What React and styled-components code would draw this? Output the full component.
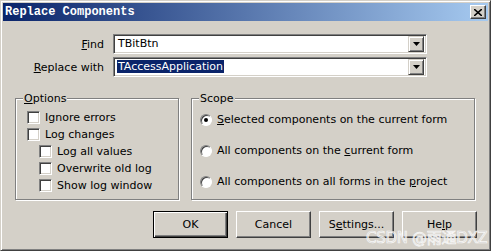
import styled, { createGlobalStyle } from "styled-components";

const Global = createGlobalStyle`
  html, body { margin: 0; padding: 0; background: #d4d0c8; }
  body { font-family: "DejaVu Sans", Verdana, sans-serif; font-size: 11px; color: #000; }
`;

const face = "#d4d0c8";

const Window = styled.div`
  width: 491px;
  height: 251px;
  box-sizing: border-box;
  background: ${face};
  border: 1px solid;
  border-color: ${face} #404040 #404040 ${face};
  box-shadow: inset 1px 1px #fff, inset -1px -1px #808080;
  padding: 2px;
  display: flex;
  flex-direction: column;
  position: relative;
  overflow: hidden;
`;

const TitleBar = styled.div`
  height: 18px;
  flex: none;
  background: linear-gradient(to right, #0a246a, #a6caf0);
  display: flex;
  align-items: center;
  justify-content: space-between;
  padding: 0 2px 0 2px;
`;

const Title = styled.span`
  font-family: "Liberation Mono", "DejaVu Sans Mono", monospace;
  font-weight: bold;
  font-size: 12px;
  color: #fff;
`;

const CloseBtn = styled.div`
  width: 16px;
  height: 14px;
  box-sizing: border-box;
  background: ${face};
  border: 1px solid;
  border-color: #fff #404040 #404040 #fff;
  box-shadow: inset -1px -1px #808080;
  display: flex;
  align-items: center;
  justify-content: center;
`;

const Body = styled.div`
  flex: 1;
  display: flex;
  flex-direction: column;
  padding: 13px 0 0 12px;
`;

const Fields = styled.div`
  display: grid;
  grid-template-columns: 89px 314px;
  column-gap: 9px;
  row-gap: 3px;
  align-items: center;
`;

const Label = styled.label`
  text-align: right;
`;

const Combo = styled.div`
  height: 20px;
  box-sizing: border-box;
  background: #fff;
  border: 1px solid;
  border-color: #808080 #fff #fff #808080;
  box-shadow: inset 1px 1px #404040, inset -1px -1px ${face};
  padding: 2px;
  display: flex;
  align-items: center;
`;

const ComboText = styled.span`
  flex: 1;
  padding-left: 1px;
  line-height: 14px;
  span {
    background: ${(p) => (p.$selected ? "#0a246a" : "transparent")};
    color: ${(p) => (p.$selected ? "#fff" : "#000")};
    padding: 0 1px;
  }
`;

const DropBtn = styled.div`
  width: 16px;
  height: 16px;
  box-sizing: border-box;
  background: ${face};
  border: 1px solid;
  border-color: ${face} #404040 #404040 ${face};
  box-shadow: inset 1px 1px #fff, inset -1px -1px #808080;
  display: flex;
  align-items: center;
  justify-content: center;
`;

const Groups = styled.div`
  display: flex;
  gap: 12px;
  margin-top: 15px;
`;

const Group = styled.div`
  width: ${(p) => p.$w}px;
  height: ${(p) => p.$h}px;
  box-sizing: border-box;
  border: 1px solid #808080;
  box-shadow: inset 1px 1px #fff, 1px 1px #fff;
  margin-top: 6px;
  display: flex;
  flex-direction: column;
`;

const Legend = styled.span`
  align-self: flex-start;
  margin: -7px 0 0 7px;
  padding: 0 1px;
  background: ${face};
  line-height: 13px;
`;

const CheckList = styled.div`
  display: flex;
  flex-direction: column;
  gap: 4px;
  padding: 6px 0 0 11px;
`;

const CheckRow = styled.div`
  display: flex;
  align-items: center;
  gap: 5px;
  height: 13px;
  padding-left: ${(p) => (p.$indent ? 12 : 0)}px;
`;

const Box = styled.span`
  width: 13px;
  height: 13px;
  box-sizing: border-box;
  background: #fff;
  border: 1px solid;
  border-color: #808080 #fff #fff #808080;
  box-shadow: inset 1px 1px #404040, inset -1px -1px ${face};
  flex: none;
`;

const RadioList = styled.div`
  display: flex;
  flex-direction: column;
  gap: 18px;
  padding: 8px 0 0 8px;
`;

const RadioRow = styled.div`
  display: flex;
  align-items: center;
  gap: 5px;
  height: 13px;
`;

const Radio = styled.span`
  width: 12px;
  height: 12px;
  box-sizing: border-box;
  border-radius: 50%;
  background: #fff;
  border: 1px solid;
  border-color: #808080 #fff #fff #808080;
  box-shadow: inset 1px 1px #404040;
  flex: none;
  display: flex;
  align-items: center;
  justify-content: center;
  &::after {
    content: "";
    width: 4px;
    height: 4px;
    border-radius: 50%;
    background: ${(p) => (p.$on ? "#000" : "transparent")};
  }
`;

const Buttons = styled.div`
  display: flex;
  gap: 8px;
  margin-top: 11px;
  padding-left: 138px;
`;

const Button = styled.div`
  width: 75px;
  height: 27px;
  box-sizing: border-box;
  background: ${face};
  border: 1px solid;
  border-color: ${(p) => (p.$default ? "#000" : `#fff #404040 #404040 #fff`)};
  box-shadow: ${(p) =>
    p.$default
      ? "inset 1px 1px #fff, inset -1px -1px #404040, inset -2px -2px #808080"
      : "inset -1px -1px #808080"};
  display: flex;
  align-items: center;
  justify-content: center;
`;

const Watermark = styled.div`
  position: absolute;
  left: 365px;
  bottom: 3px;
  font-family: "DejaVu Sans", "Noto Sans CJK SC", sans-serif;
  font-size: 15px;
  letter-spacing: -0.3px;
  color: rgba(215, 215, 215, 0.75);
  -webkit-text-stroke: 0.7px rgba(255, 255, 255, 0.85);
  pointer-events: none;
  white-space: nowrap;
`;

const Arrow = () => (
  <svg width="7" height="4" viewBox="0 0 7 4">
    <path d="M0 0h7L3.5 4z" fill="#000" />
  </svg>
);

export default function App() {
  return (
    <>
      <Global />
      <Window>
        <TitleBar>
          <Title>Replace Components</Title>
          <CloseBtn>
            <svg width="8" height="7" viewBox="0 0 8 7">
              <path d="M0 0l8 7M8 0L0 7" stroke="#000" strokeWidth="1.6" />
            </svg>
          </CloseBtn>
        </TitleBar>
        <Body>
          <Fields>
            <Label>
              <u>F</u>ind
            </Label>
            <Combo>
              <ComboText>
                <span>TBitBtn</span>
              </ComboText>
              <DropBtn>
                <Arrow />
              </DropBtn>
            </Combo>
            <Label>
              <u>R</u>eplace with
            </Label>
            <Combo>
              <ComboText $selected>
                <span>TAccessApplication</span>
              </ComboText>
              <DropBtn>
                <Arrow />
              </DropBtn>
            </Combo>
          </Fields>
          <Groups>
            <Group $w={164} $h={102}>
              <Legend>
                <u>O</u>ptions
              </Legend>
              <CheckList>
                <CheckRow>
                  <Box />
                  Ignore errors
                </CheckRow>
                <CheckRow>
                  <Box />
                  Log changes
                </CheckRow>
                <CheckRow $indent>
                  <Box />
                  Log all values
                </CheckRow>
                <CheckRow $indent>
                  <Box />
                  Overwrite old log
                </CheckRow>
                <CheckRow $indent>
                  <Box />
                  Show log window
                </CheckRow>
              </CheckList>
            </Group>
            <Group $w={284} $h={102}>
              <Legend>Scope</Legend>
              <RadioList>
                <RadioRow>
                  <Radio $on />
                  <span>
                    <u>S</u>elected components on the current form
                  </span>
                </RadioRow>
                <RadioRow>
                  <Radio />
                  <span>
                    All components on the <u>c</u>urrent form
                  </span>
                </RadioRow>
                <RadioRow>
                  <Radio />
                  <span>
                    All components on all forms in the <u>p</u>roject
                  </span>
                </RadioRow>
              </RadioList>
            </Group>
          </Groups>
          <Buttons>
            <Button $default>OK</Button>
            <Button>Cancel</Button>
            <Button>
              <span>
                S<u>e</u>ttings...
              </span>
            </Button>
            <Button>
              <span>
                He<u>l</u>p
              </span>
            </Button>
          </Buttons>
        </Body>
        <Watermark>CSDN @雨通DXZ</Watermark>
      </Window>
    </>
  );
}
